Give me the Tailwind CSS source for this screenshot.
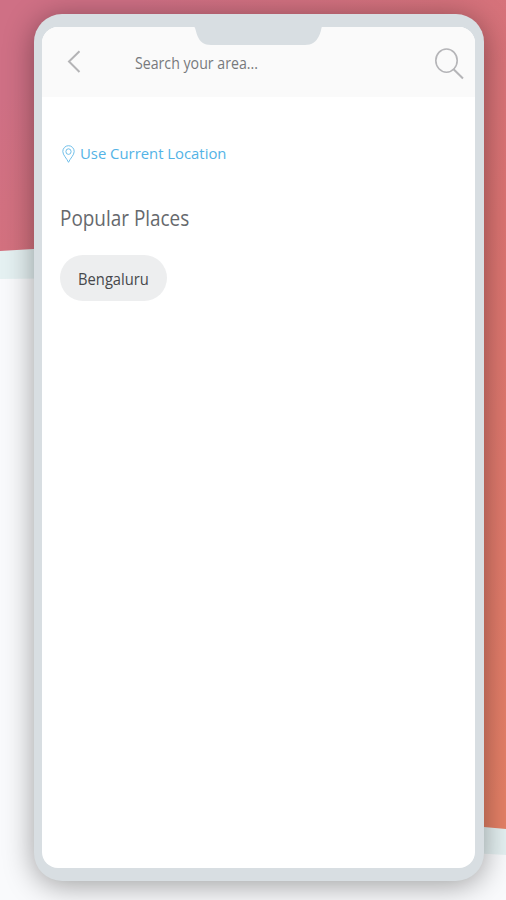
<!DOCTYPE html>
<html lang="en">
<head>
  <meta charset="UTF-8" />
  <meta name="viewport" content="width=device-width, initial-scale=1.0" />
  <title>Select Location</title>
  <script src="https://cdn.jsdelivr.net/npm/@tailwindcss/browser@4"></script>
</head>
<body class="relative h-[900px] w-[506px] overflow-hidden bg-[#f9fafc] font-['Open_Sans','Noto_Sans',sans-serif]">
  <!-- slanted backdrop -->
  <svg class="absolute inset-0" width="506" height="900" viewBox="0 0 506 900">
    <defs>
      <linearGradient id="bg" gradientUnits="userSpaceOnUse" x1="0" y1="100" x2="506" y2="800">
        <stop offset="0" stop-color="#cf7085" />
        <stop offset="0.45" stop-color="#dc7472" />
        <stop offset="1" stop-color="#e58066" />
      </linearGradient>
    </defs>
    <path d="M0 240H250V800H506V855L250 840V276L0 279Z" fill="#e5f1f2" />
    <path d="M0 0H506V829L250 806L250 236L0 251Z" fill="url(#bg)" />
  </svg>

  <!-- phone -->
  <div class="relative ml-[34px] mt-[14px] h-[867px] w-[450px] rounded-[28px] bg-[#d8dee2] pl-2 pr-[9px] pt-[13px] pb-[13px] shadow-[0_4px_30px_rgba(0,0,0,0.38)]">
    <div class="flex h-full flex-col overflow-hidden rounded-2xl bg-white">
      <div class="flex h-[70px] items-center bg-[#fafafa] pl-[25px] pr-[11px]">
        <svg class="h-6 w-3.5" viewBox="0 0 14 24" fill="none" stroke="#b4b4b6" stroke-width="2">
          <path d="M12.5 1.3L2 11.500L12.5 22" />
        </svg>
        <span class="ml-[54px] mt-px w-[123px] origin-left scale-x-[0.885] whitespace-nowrap text-base text-[#77797c]">Search your area...</span>
        <svg class="ml-auto mt-[3px] h-8 w-[30px]" viewBox="0 0 30 32" fill="none" stroke="#b5b5b8" stroke-width="1.6">
          <ellipse cx="12.5" cy="12.6" rx="10.7" ry="11.6" />
          <path d="M19.3 21L29 30.5" stroke-width="2" />
        </svg>
      </div>

      <div class="flex flex-col items-start px-[18px] pt-[45px]">
        <a href="#" class="flex items-center gap-[5px] text-[#53b3e6]">
          <svg class="ml-0.5 mt-0.5 h-[18px] w-[13px]" viewBox="0 0 13 18" fill="none" stroke="#70bfe9" stroke-width="1">
            <path d="M6.5 17.3C4.8 13.4 0.8 10 0.8 6.5A5.7 5.8 0 0 1 12.2 6.5C12.2 10 8.2 13.4 6.5 17.3Z" />
            <ellipse cx="6.5" cy="6.6" rx="2.6" ry="2.8" />
          </svg>
          <span class="origin-left scale-x-[0.99] whitespace-nowrap text-[15px] font-medium">Use Current Location</span>
        </a>
        <h2 class="mt-[37px] origin-left scale-x-[0.86] whitespace-nowrap text-[22px] leading-[30px] text-[#66696d]">Popular Places</h2>
        <div class="mt-[23px] flex h-[46px] w-[107px] items-center justify-center rounded-full bg-[#edeeef]">
          <span class="mt-0.5 scale-x-[0.92] text-base font-medium text-[#46484b]">Bengaluru</span>
        </div>
      </div>
    </div>

    <!-- notch -->
    <svg class="absolute left-[160px] top-[12px]" width="128" height="19" viewBox="0 0 128 19">
      <path d="M0 0H128C127 4 126.500 7 125 10C122 16 118 19 111 19H17C10 19 6 16 3.500 10C2 7 2 3 0 0Z" fill="#d8dee2" />
    </svg>
  </div>
</body>
</html>
